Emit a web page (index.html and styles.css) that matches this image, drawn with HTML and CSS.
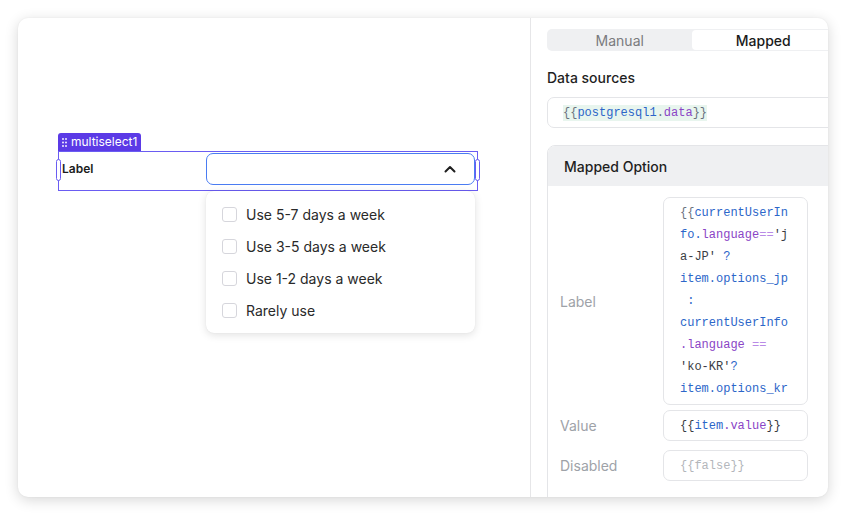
FILE: index.html
```html
<!DOCTYPE html>
<html>
<head>
<meta charset="utf-8">
<link rel="stylesheet" href="styles.css">
</head>
<body>
<div class="window">
  <div class="canvas">
    <div class="widget">
      <div class="widget-tag">
        <svg class="grip" width="5" height="9" viewBox="0 0 5 9"><g fill="#fff"><circle cx="1" cy="1" r="0.9"/><circle cx="4" cy="1" r="0.9"/><circle cx="1" cy="4.5" r="0.9"/><circle cx="4" cy="4.5" r="0.9"/><circle cx="1" cy="8" r="0.9"/><circle cx="4" cy="8" r="0.9"/></g></svg>
        <span>multiselect1</span>
      </div>
      <div class="widget-box">
        <div class="widget-label">Label</div>
        <div class="select">
          <svg class="chevron" width="12" height="8" viewBox="0 0 12 8"><path d="M1.5 6.5 L6 2 L10.5 6.5" fill="none" stroke="#1f1f1f" stroke-width="2" stroke-linecap="round" stroke-linejoin="round"/></svg>
        </div>
        <span class="handle handle-left"></span>
        <span class="handle handle-right"></span>
        <div class="dropdown">
          <div class="option"><span class="check"></span>Use 5-7 days a week</div>
          <div class="option"><span class="check"></span>Use 3-5 days a week</div>
          <div class="option"><span class="check"></span>Use 1-2 days a week</div>
          <div class="option"><span class="check"></span>Rarely use</div>
        </div>
      </div>
    </div>
  </div>
  <div class="panel">
    <div class="panel-inner">
      <div class="tabs">
        <div class="tab">Manual</div>
        <div class="tab tab-active">Mapped</div>
      </div>
      <div class="section-title">Data sources</div>
      <div class="code-input">
        <span class="code hl"><span class="c-br">{{</span><span class="c-id">postgresql1</span><span class="c-br">.</span><span class="c-prop">data</span><span class="c-br">}}</span></span>
      </div>
      <div class="card">
        <div class="card-head">Mapped Option</div>
        <div class="card-body">
          <div class="field-label">Label</div>
          <div class="field-input multi code"><span class="line"><span class="c-br">{{</span><span class="c-id">currentUserIn</span></span><span class="line"><span class="c-id">fo.</span><span class="c-prop">language</span><span class="c-op">==</span><span class="c-str">'j</span></span><span class="line"><span class="c-str">a-JP'</span> <span class="c-id">?</span></span><span class="line"><span class="c-id">item.options_jp</span></span><span class="line"> <span class="c-id">:</span></span><span class="line"><span class="c-id">currentUserInfo</span></span><span class="line"><span class="c-prop">.language</span> <span class="c-op">==</span></span><span class="line"><span class="c-str">'ko-KR'</span><span class="c-id">?</span></span><span class="line"><span class="c-id">item.options_kr</span></span></div>
          <div class="field-label row-value">Value</div>
          <div class="field-input single code row-value"><span class="c-dark">{{</span><span class="c-id">item</span><span class="c-prop">.value</span><span class="c-dark">}}</span></div>
          <div class="field-label row-disabled">Disabled</div>
          <div class="field-input single code row-disabled"><span class="c-muted">{{false}}</span></div>
        </div>
      </div>
    </div>
  </div>
</div>
</body>
</html>
```

FILE: styles.css
```css
* { box-sizing: border-box; }
html, body { margin: 0; padding: 0; background: #ffffff; }
body {
  font-family: Inter, "Noto Sans", sans-serif;
  width: 846px;
  height: 515px;
  overflow: hidden;
}

.window {
  margin: 18px 0 0 18px;
  width: 810px;
  height: 479px;
  background: #fff;
  border-radius: 10px;
  box-shadow: 0 3px 14px rgba(0, 0, 0, 0.16), 0 0 2px rgba(0, 0, 0, 0.06);
  display: flex;
  overflow: hidden;
}

/* ---------- left canvas ---------- */
.canvas {
  width: 513px;
  border-right: 1px solid #e6e6e8;
  padding: 115px 0 0 40px;
}
.widget { width: 420px; }
.widget-tag {
  display: flex;
  width: max-content;
  align-items: center;
  gap: 4px;
  height: 18px;
  padding: 0 4px 0 4px;
  background: #5b3ae6;
  color: #fff;
  font-size: 12px;
  line-height: 18px;
  border-radius: 3px 3px 0 0;
}
.grip { display: block; }
.widget-box {
  position: relative;
  height: 40px;
  border: 1px solid #6a5cf2;
  display: flex;
  align-items: flex-start;
  padding-top: 1px;
}
.widget-label {
  width: 147px;
  height: 32px;
  line-height: 32px;
  padding-left: 3px;
  font-size: 12px;
  font-weight: 600;
  color: #1c1c1c;
}
.select {
  width: 269px;
  height: 32px;
  border: 1.5px solid #4a7cf2;
  border-radius: 7px;
  display: flex;
  align-items: center;
  justify-content: flex-end;
  padding-right: 18px;
}
.chevron { display: block; }
.handle {
  position: absolute;
  top: 7px;
  width: 5px;
  height: 22px;
  border: 1.5px solid #6a5cf2;
  border-radius: 3px;
  background: #fff;
}
.handle-left { left: -3px; }
.handle-right { right: -3px; }
.dropdown {
  position: absolute;
  top: 39px;
  left: 147px;
  width: 269px;
  padding: 7px 0;
  background: #fff;
  border-radius: 8px;
  box-shadow: 0 2px 8px rgba(0, 0, 0, 0.12), 0 0 1px rgba(0, 0, 0, 0.1);
}
.option {
  height: 32px;
  display: flex;
  align-items: center;
  gap: 9px;
  padding-left: 16px;
  font-size: 14px;
  color: #2a2a2a;
}
.check {
  width: 15px;
  height: 15px;
  border: 1px solid #d6d6dc;
  border-radius: 3px;
  background: #fff;
}

/* ---------- right panel ---------- */
.panel {
  flex: 1;
  overflow: hidden;
  padding: 11px 0 0 16px;
}
.panel-inner { width: 289px; }
.tabs {
  display: flex;
  height: 22px;
  background: #eff0f2;
  border-radius: 5px;
  padding: 1px;
}
.tab {
  flex: 1;
  display: flex;
  align-items: center;
  justify-content: center;
  font-size: 14px;
  color: #7a7b7e;
  border-radius: 4px;
}
.tab-active {
  background: #fff;
  color: #1a1a1a;
  font-weight: 500;
}
.section-title {
  margin-top: 17px;
  height: 20px;
  line-height: 20px;
  font-size: 14px;
  font-weight: 500;
  color: #1f1f1f;
}
.code-input {
  margin-top: 9px;
  height: 31px;
  border: 1px solid #e4e5e8;
  border-radius: 7px;
  display: flex;
  align-items: center;
  padding-left: 15px;
}
.code {
  font-family: "Liberation Mono", "DejaVu Sans Mono", monospace;
  font-size: 12px;
}
.hl { background: #e8f5ee; line-height: 16px; }
.c-br { color: #6b7280; }
.c-dark { color: #3a3d44; }
.c-id { color: #2c66c9; }
.c-prop { color: #8a45c6; }
.c-op { color: #b98ae6; }
.c-str { color: #3a3d44; }
.c-muted { color: #b3b6bb; }

.card {
  margin-top: 17px;
  height: 400px;
  border: 1px solid #e4e5e8;
  border-radius: 8px;
  overflow: hidden;
}
.card-head {
  height: 40px;
  background: #eff0f2;
  display: flex;
  align-items: center;
  padding-left: 16px;
  font-size: 14px;
  font-weight: 500;
  color: #1f1f1f;
}
.card-body {
  display: grid;
  grid-template-columns: 103px 145px;
  align-items: center;
  padding: 11px 0 0 12px;
}
.field-label {
  font-size: 14px;
  color: #9ea2a8;
}
.field-input {
  border: 1px solid #e4e5e8;
  border-radius: 7px;
  padding-left: 16px;
}
.multi {
  padding-top: 4px;
  padding-bottom: 4px;
}
.line {
  display: block;
  height: 22px;
  line-height: 22px;
  white-space: pre;
}
.single {
  height: 31px;
  display: flex;
  align-items: center;
}
.row-value { margin-top: 5px; }
.row-disabled { margin-top: 9px; }
```
